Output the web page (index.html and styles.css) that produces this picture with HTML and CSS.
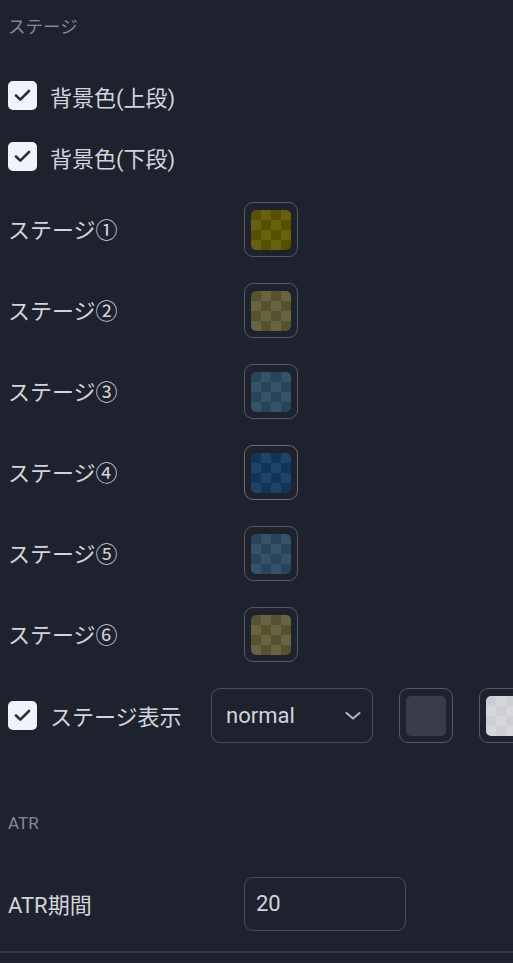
FILE: index.html
```html
<!DOCTYPE html>
<html lang="ja">
<head>
<meta charset="utf-8">
<title>Settings</title>
<link rel="stylesheet" href="styles.css">
</head>
<body>
<div class="panel">
  <div class="section-title first">ステージ</div>

  <div class="check-row first-check">
    <span class="checkbox"><svg viewBox="0 0 29 29" width="29" height="29"><path d="M8 14.5 L12.3 18.6 L21 10" fill="none" stroke="#2a2e39" stroke-width="2.6" stroke-linecap="round" stroke-linejoin="round"/></svg></span>
    <span class="label check-label">背景色(上段)</span>
  </div>
  <div class="check-row">
    <span class="checkbox"><svg viewBox="0 0 29 29" width="29" height="29"><path d="M8 14.5 L12.3 18.6 L21 10" fill="none" stroke="#2a2e39" stroke-width="2.6" stroke-linecap="round" stroke-linejoin="round"/></svg></span>
    <span class="label check-label">背景色(下段)</span>
  </div>

  <div class="row first-stage">
    <span class="label col">ステージ①</span>
    <span class="swatch"><span class="chip c-yellow"></span></span>
  </div>
  <div class="row">
    <span class="label col">ステージ②</span>
    <span class="swatch"><span class="chip c-olive"></span></span>
  </div>
  <div class="row">
    <span class="label col">ステージ③</span>
    <span class="swatch"><span class="chip c-slate"></span></span>
  </div>
  <div class="row">
    <span class="label col">ステージ④</span>
    <span class="swatch active"><span class="chip c-blue"></span></span>
  </div>
  <div class="row">
    <span class="label col">ステージ⑤</span>
    <span class="swatch"><span class="chip c-slate"></span></span>
  </div>
  <div class="row">
    <span class="label col">ステージ⑥</span>
    <span class="swatch"><span class="chip c-olive"></span></span>
  </div>

  <div class="row display-row">
    <span class="checkbox"><svg viewBox="0 0 29 29" width="29" height="29"><path d="M8 14.5 L12.3 18.6 L21 10" fill="none" stroke="#2a2e39" stroke-width="2.6" stroke-linecap="round" stroke-linejoin="round"/></svg></span>
    <span class="label display-label">ステージ表示</span>
    <span class="select">
      <span class="select-text">normal</span>
      <svg class="chevron" viewBox="0 0 16 8" width="16" height="8"><path d="M1.5 1 L8 6.5 L14.5 1" fill="none" stroke="#b2b5be" stroke-width="2" stroke-linecap="round" stroke-linejoin="round"/></svg>
    </span>
    <span class="swatch"><span class="chip c-dark"></span></span>
    <span class="swatch"><span class="chip c-light"></span></span>
  </div>

  <div class="section-title atr-title">ATR</div>

  <div class="row atr-row">
    <span class="label col">ATR期間</span>
    <span class="input">20</span>
  </div>
</div>
<div class="divider"></div>
</body>
</html>
```

FILE: styles.css
```css
html, body {
  margin: 0;
  padding: 0;
  background: #1e222d;
  overflow: hidden;
}

body {
  width: 513px;
  height: 963px;
  font-family: Roboto, "Noto Sans CJK JP", sans-serif;
  color: #d1d4dc;
}

.panel {
  display: flex;
  flex-direction: column;
  padding: 16px 0 0 8px;
  width: 600px;
}

.section-title {
  font-size: 17.5px;
  line-height: 22px;
  height: 22px;
  color: #868993;
  white-space: nowrap;
}

.atr-title {
  margin-top: 69px;
  font-size: 17px;
}

.check-row {
  display: flex;
  align-items: center;
  height: 34px;
  margin-top: 27px;
  gap: 13px;
}

.first-check {
  margin-top: 40px;
}

.checkbox {
  width: 29px;
  height: 29px;
  border-radius: 5px;
  background: #f0f3fa;
  display: flex;
  flex: none;
}

.label {
  font-size: 22px;
  line-height: 30px;
  white-space: nowrap;
}

.check-label {
  padding-top: 8px;
}

.row {
  display: flex;
  align-items: center;
  height: 55px;
  margin-top: 26px;
}

.first-stage {
  margin-top: 29px;
}

.col {
  width: 236px;
  flex: none;
  padding-top: 3px;
}

.swatch {
  width: 54px;
  height: 55px;
  box-sizing: border-box;
  border: 1px solid #555864;
  border-radius: 9px;
  display: flex;
  align-items: center;
  justify-content: center;
  flex: none;
}

.swatch.active {
  border-color: #6a6d78;
}

.chip {
  width: 40px;
  height: 40px;
  border-radius: 5px;
  background-color: var(--light);
  background-image:
    linear-gradient(45deg, var(--dark) 25%, transparent 25%, transparent 75%, var(--dark) 75%),
    linear-gradient(45deg, var(--dark) 25%, transparent 25%, transparent 75%, var(--dark) 75%);
  background-size: 20px 20px;
  background-position: 10px 0, 0 10px;
}

.c-yellow { --light: #67610e; --dark: #565000; }
.c-olive  { --light: #686340; --dark: #56522f; }
.c-slate  { --light: #345268; --dark: #29445a; }
.c-blue   { --light: #1c4468; --dark: #0f3656; }
.c-dark   { --light: #3a3c47; --dark: #3a3c47; }
.c-light  { --light: #d5d6da; --dark: #cdced2; }

.display-row {
  gap: 0;
}

.display-label {
  margin-left: 13px;
  width: 161px;
  flex: none;
  padding-top: 5px;
}

.select {
  width: 162px;
  height: 55px;
  box-sizing: border-box;
  border: 1px solid #4a4d58;
  border-radius: 9px;
  display: flex;
  align-items: center;
  justify-content: space-between;
  padding: 0 11px 0 14px;
  flex: none;
  margin-right: 26px;
}

.select-text {
  font-size: 22px;
  line-height: 30px;
}

.chevron {
  display: block;
}

.display-row .swatch + .swatch {
  margin-left: 26px;
}

.atr-row {
  margin-top: 43px;
  height: 54px;
}

.input {
  width: 162px;
  height: 54px;
  box-sizing: border-box;
  border: 1px solid #4a4d58;
  border-radius: 9px;
  display: flex;
  align-items: center;
  padding-left: 11px;
  font-size: 22px;
  line-height: 30px;
  flex: none;
}

.divider {
  margin-top: 20px;
  height: 2px;
  background: #363a45;
  width: 100%;
}
```
